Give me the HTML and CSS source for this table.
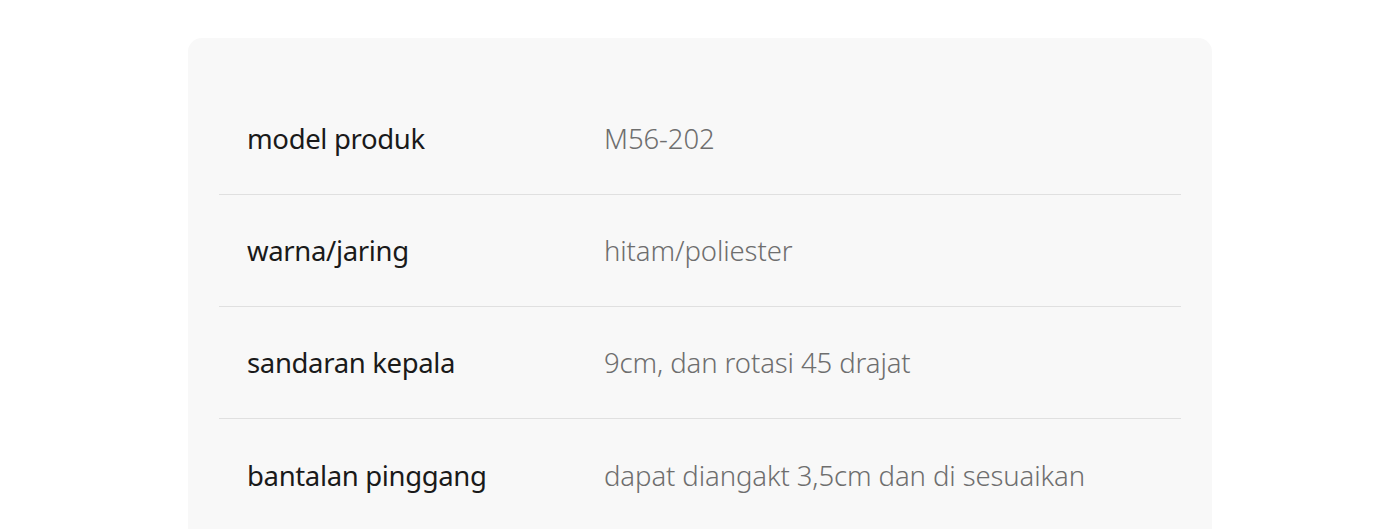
FILE: index.html
```html
<!DOCTYPE html>
<html>
<head>
<meta charset="utf-8">
<link rel="stylesheet" href="styles.css">
</head>
<body>
<div class="card">
  <div class="row"><div class="label">model produk</div><div class="value">M56-202</div></div>
  <div class="row"><div class="label">warna/jaring</div><div class="value">hitam/poliester</div></div>
  <div class="row"><div class="label">sandaran kepala</div><div class="value">9cm, dan rotasi 45 drajat</div></div>
  <div class="row"><div class="label">bantalan pinggang</div><div class="value">dapat diangakt 3,5cm dan di sesuaikan</div></div>
</div>
</body>
</html>
```
FILE: styles.css
```css
html, body { margin: 0; padding: 0; background: #fff; }
body { font-family: "Noto Sans", sans-serif; height: 529px; overflow: hidden; }
.card {
  margin: 38px 0 0 188px;
  width: 1024px;
  background: #f8f8f8;
  border-radius: 14px 14px 0 0;
  padding: 45px 31px 0;
  box-sizing: border-box;
  height: 491px;
}
.row {
  display: flex;
  align-items: center;
  height: 112px;
  padding-left: 28px;
  border-bottom: 1.5px solid #e0e0e0;
  box-sizing: border-box;
  font-size: 27.5px;
}
.row:last-child { border-bottom: none; }
.label { width: 357px; color: #1a1a1a; letter-spacing: -0.35px; }
.value { color: #6e6e6e; font-weight: 300; letter-spacing: -0.1px; }
```
